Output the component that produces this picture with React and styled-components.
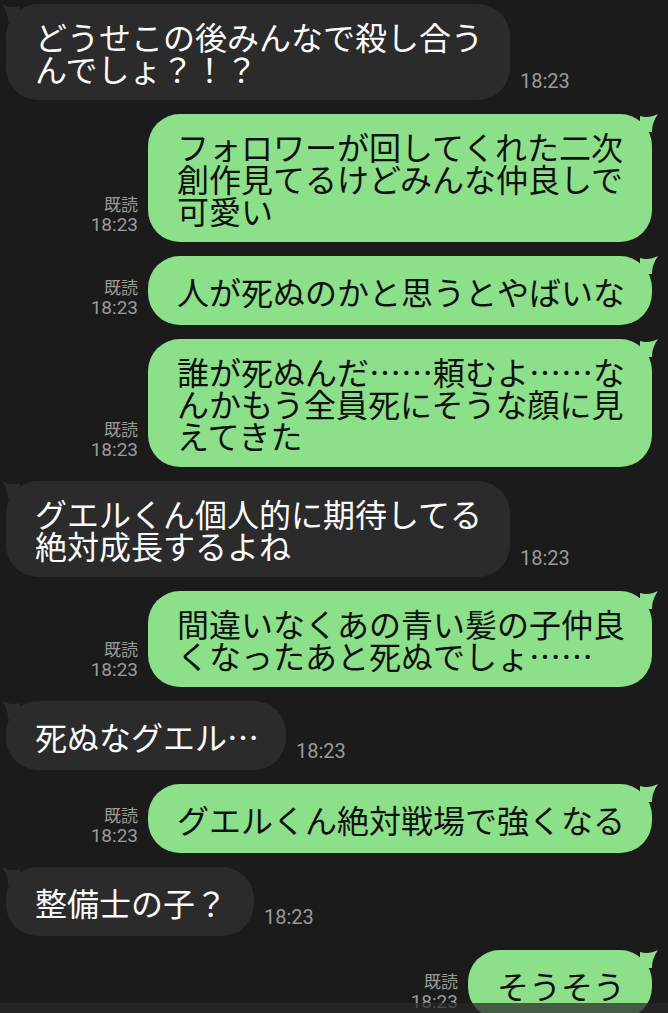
import React from 'react';
import styled, { createGlobalStyle } from 'styled-components';

const messages = [
  { from: 'them', text: 'どうせこの後みんなで殺し合うんでしょ？！？' },
  { from: 'me', text: 'フォロワーが回してくれた二次創作見てるけどみんな仲良しで可愛い' },
  { from: 'me', text: '人が死ぬのかと思うとやばいな' },
  { from: 'me', text: '誰が死ぬんだ……頼むよ……なんかもう全員死にそうな顔に見えてきた' },
  { from: 'them', text: 'グエルくん個人的に期待してる絶対成長するよね' },
  { from: 'me', text: '間違いなくあの青い髪の子仲良くなったあと死ぬでしょ……' },
  { from: 'them', text: '死ぬなグエル…' },
  { from: 'me', text: 'グエルくん絶対戦場で強くなる' },
  { from: 'them', text: '整備士の子？' },
  { from: 'me', text: 'そうそう' },
];

export default function App() {
  return (
    <>
      <GlobalStyle />
      <Chat>
        {messages.map((m, i) =>
          m.from === 'me' ? (
            <Row key={i} $mine>
              <Meta>
                <ReadMark>既読</ReadMark>
                <span>18:23</span>
              </Meta>
              <Bubble $mine>
                <Tail $mine viewBox="0 0 20 20">
                  <path d="M0 0 C6 2 12 1 18 -2 C14 4 12 9 12 16 L0 16 Z" />
                </Tail>
                <Text>{m.text}</Text>
              </Bubble>
            </Row>
          ) : (
            <Row key={i}>
              <Bubble>
                <Tail viewBox="0 0 20 20">
                  <path d="M20 0 C14 2 8 1 2 -2 C6 4 8 9 8 16 L20 16 Z" />
                </Tail>
                <Text>{m.text}</Text>
              </Bubble>
              <Time>18:23</Time>
            </Row>
          )
        )}
      </Chat>
      <BottomBar />
    </>
  );
}

const GlobalStyle = createGlobalStyle`
  html, body {
    margin: 0;
    background: #1b1b1b;
  }
  body {
    font-family: "Noto Sans CJK JP", "Noto Sans", sans-serif;
    overflow: hidden;
  }
`;

const Chat = styled.div`
  display: flex;
  flex-direction: column;
  gap: 14px;
  padding: 4px 16px 0 6px;
`;

const Row = styled.div`
  display: flex;
  align-items: flex-end;
  justify-content: ${(p) => (p.$mine ? 'flex-end' : 'flex-start')};
  gap: 10px;
`;

const Bubble = styled.div`
  position: relative;
  box-sizing: border-box;
  display: flex;
  align-items: center;
  flex-shrink: 0;
  min-height: 69px;
  padding: 16px 27px 16px 29px;
  border-radius: 32px;
  background: ${(p) => (p.$mine ? '#8de08a' : '#2b2b2b')};
  color: ${(p) => (p.$mine ? '#111' : '#fafafa')};
`;

const Text = styled.div`
  max-width: 448px;
  font-size: 32px;
  line-height: 32px;
  line-break: anywhere;
  word-break: break-all;
`;

const Tail = styled.svg`
  position: absolute;
  top: 2px;
  width: 20px;
  height: 20px;
  overflow: visible;
  ${(p) => (p.$mine ? 'right: -8px;' : 'left: -6px;')}
  fill: ${(p) => (p.$mine ? '#8de08a' : '#2b2b2b')};
`;

const Time = styled.span`
  font-family: Roboto, "Noto Sans", sans-serif;
  font-size: 20px;
  line-height: 22px;
  color: #9a9a9a;
  padding-bottom: 8px;
`;

const Meta = styled.div`
  display: flex;
  flex-direction: column;
  align-items: flex-end;
  font-family: Roboto, "Noto Sans CJK JP", sans-serif;
  font-size: 19px;
  line-height: 20px;
  color: #9a9a9a;
  padding-bottom: 7px;
`;

const ReadMark = styled.span`
  font-size: 17px;
  line-height: 19px;
`;

const BottomBar = styled.div`
  position: fixed;
  left: 0;
  right: 0;
  bottom: 0;
  height: 10px;
  background: rgba(40, 40, 40, 0.72);
`;
